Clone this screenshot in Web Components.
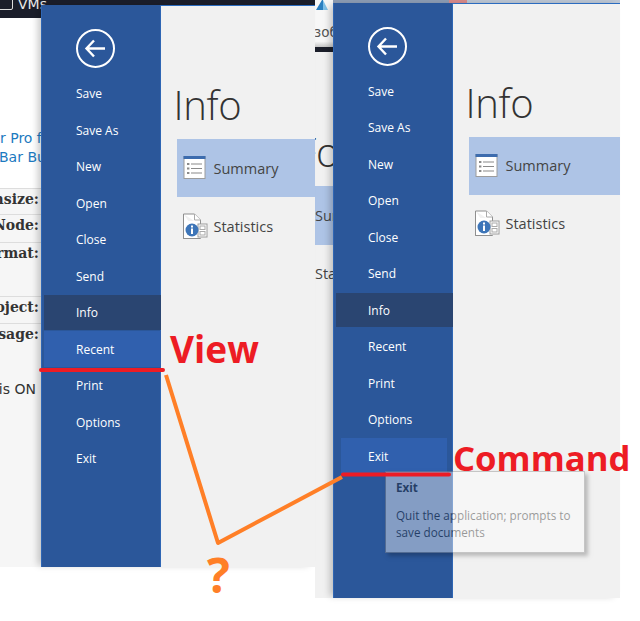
<!DOCTYPE html>
<html lang="en">
<head>
<meta charset="utf-8">
<title>View vs Command</title>
<style>
html,body{margin:0;padding:0;background:#fff}
</style>
</head>
<body>
<x-desktop>
  <x-host-page></x-host-page>
  <x-middle-strip></x-middle-strip>
  <x-top-strip></x-top-strip>
  <x-backstage style="left:41px;top:5px;width:274px;height:562px" hot="Recent" heading="Info"></x-backstage>
  <x-backstage style="left:333px;top:2.5px;width:287px;height:595.5px" hot="Exit" inset heading="Info"></x-backstage>
  <x-tip style="left:385px;top:471px"></x-tip>
  <x-notes></x-notes>
</x-desktop>
<script>
const FONT='"Open Sans","Noto Sans",sans-serif';
function el(name,html){
  customElements.define(name,class extends HTMLElement{
    connectedCallback(){
      if(this.shadowRoot)return;
      this.attachShadow({mode:'open'}).innerHTML=typeof html==='function'?html(this):html;
    }
  });
}
el('x-desktop',`<style>:host{display:block;position:relative;width:640px;height:621px;overflow:hidden;background:#fff}</style><slot></slot>`);

el('x-host-page',`<style>
:host{position:absolute;left:0;top:0;width:315px;height:567px;overflow:hidden;background:#fff;font:14px "DejaVu Sans",sans-serif;display:flex;flex-direction:column}
.bar{height:18px;flex:none;background:#1b1e2a;color:#e8e8e8;position:relative;font-size:14px;line-height:14px}
.bar i{position:absolute;left:-6px;top:-6px;width:17px;height:14px;border:1px solid #ddd;border-radius:2px}
.bar span{position:absolute;left:18px;top:-3px}
.col{width:41px;flex:1;display:flex;flex-direction:column;overflow:hidden}
.links{flex:none;height:170px;box-sizing:border-box;color:#1c7ac0;white-space:nowrap;display:flex;flex-direction:column;justify-content:flex-end;line-height:19px;padding-bottom:21px}
.rows{flex:1;background:#f6f6f6;border-top:1px solid #ddd;font:bold 14px/20px "DejaVu Serif",serif;color:#333;display:flex;flex-direction:column;align-items:stretch}
.row{flex:none;box-sizing:border-box;border-bottom:1px solid #ddd;display:flex;justify-content:flex-end;align-items:flex-start;overflow:hidden;white-space:nowrap;padding-right:2px}
.on{font:14px/20px "DejaVu Sans",sans-serif;display:flex;justify-content:flex-end;padding-right:5px;color:#333;white-space:nowrap}
</style>
<div class="bar"><i></i><span>VMs</span></div>
<div class="col">
<div class="links"><div>r Pro f</div><div style="margin-left:-1px">Bar Bu</div></div>
<div class="rows">
  <div class="row" style="height:26px">nsize:</div><div class="row" style="height:28px">Node:</div><div class="row" style="height:54px">rmat:</div><div class="row" style="height:27px">oject:</div><div class="row" style="height:55px;border:0">sage:</div>
  <div class="on">is ON</div>
</div>
</div>`);

el('x-top-strip',`<style>
:host{position:absolute;left:333px;top:0;width:287px;height:3px;background:#b9c2cf;display:flex}
i{display:block;height:3px}
</style><i style="width:120px;background:#8d9db5"></i><i style="width:18px;margin-left:-4px;background:#d98a8a"></i><i style="flex:1;background:#bcc6d4"></i>`);

el('x-middle-strip',`<style>
:host{position:absolute;left:315px;top:0;width:18px;height:598px;overflow:hidden;background:#f1f1f1;font-family:${FONT};color:#444}
.top{height:47px;background:linear-gradient(#f7f7f7 88%,#c4c4c4);position:relative}
.tri{position:absolute;left:1px;top:0}
.top span{position:absolute;left:-1px;top:24px;color:#555;font:13.5px "DejaVu Sans",sans-serif}
.dark{height:5px;background:#1b1e2a}
.f{position:absolute;left:-19px;top:127px;font-size:40px;font-weight:300;line-height:50px;color:#333;white-space:nowrap}
.band{position:absolute;left:0;top:186px;width:18px;height:59px;background:#aec4e6;line-height:59px;font-size:14.5px;white-space:nowrap;overflow:hidden}
.st{position:absolute;left:0;top:264px;font-size:14.5px;white-space:nowrap}
</style>
<div class="top"><svg class="tri" width="12" height="11"><path d="M0 10 6 0h1v10z" fill="#2a7fc0"/><path d="M7 0l5 10H7z" fill="#7fc0e8"/></svg><span>зоб</span></div>
<div class="dark"></div>
<div class="f">Fo</div>
<div class="band">Sur</div>
<div class="st">Sta</div>`);

el('x-menu-item',`<style>
:host{display:block;height:36.5px;box-sizing:border-box;padding:1px 0 1px 2px;margin-right:-1px;color:#fff;font:12px/36.5px ${FONT}}
div{height:100%;padding-left:32px;box-sizing:border-box}
:host([info]) div{background:#2a4571}
:host([hot]) div{background:#3060ae;line-height:38.5px}
:host([hot]){padding:0 0 0 2px}
:host([inset]){padding:0 6px 0 7px}
:host([inset]) div{padding-left:27px}
</style><div><slot></slot></div>`);

el('x-back',`<style>:host{display:block;width:39px;height:38px;margin:24px 0 8.25px 34px}svg{display:block}</style>
<svg width="39" height="39" viewBox="0 0 39 39"><circle cx="19.500" cy="19.500" r="18.500" fill="none" stroke="#fff" stroke-width="2"/><path d="M10.500 19.500H29M18 11.500 10.500 19.500 18 27.500" fill="none" stroke="#fff" stroke-width="2.400"/></svg>`);

el('x-section',t=>{
  const sum=t.getAttribute('kind')==='summary';
  const icon=sum?`<svg width="24" height="26" viewBox="0 0 24 26" style="margin-left:1px"><rect x="1" y="1.500" width="21" height="22" fill="#fff" stroke="#9c9c9c"/><rect x="0.500" y="1" width="22" height="3" fill="#3d6cae"/><g fill="#8a8a8a"><rect x="4" y="8" width="2.400" height="2"/><rect x="4" y="12.500" width="2.400" height="2"/><rect x="4" y="17" width="2.400" height="2"/><rect x="8" y="8.500" width="11" height="1"/><rect x="8" y="13" width="11" height="1"/><rect x="8" y="17.500" width="11" height="1"/></g></svg>`
  :`<svg width="26" height="27" viewBox="0 0 26 27"><path d="M1.500 1h11l6 6v5M1.500 1v24.500h17" fill="#fff" stroke="#8f8f8f"/><path d="M12.500 1v6h6" fill="#fff" stroke="#aaa"/><rect x="2" y="8" width="16" height="17" fill="#fff"/><path d="M1.500 1v24.500h17" fill="none" stroke="#8f8f8f"/><rect x="16" y="11" width="9" height="13" fill="#fff" stroke="#9c9c9c"/><rect x="18" y="13" width="5" height="3.500" fill="none" stroke="#aaa"/><rect x="18" y="18.500" width="5" height="3.500" fill="none" stroke="#aaa"/><circle cx="10" cy="17" r="6.500" fill="#3d75b8"/><rect x="9" y="15.500" width="2" height="5.500" fill="#fff"/><rect x="9" y="12.500" width="2" height="2" fill="#fff"/></svg>`;
  return `<style>
  :host{display:flex;align-items:center;height:58px;box-sizing:border-box;padding-left:5.500px;font:14.5px ${FONT};color:#444;white-space:nowrap;overflow:hidden}
  :host([kind=summary]){background:#aec4e6}
  .i{flex:none;width:31.500px;display:flex}
  svg{flex:none}
  </style><div class="i">${icon}</div><span><slot></slot></span>`;
});

el('x-backstage',t=>{
  const hot=t.getAttribute('hot'),inset=t.hasAttribute('inset');
  const items=['Save','Save As','New','Open','Close','Send','Info','Recent','Print','Options','Exit'];
  const lis=items.map(n=>`<x-menu-item ${n==='Info'?'info':''} ${n===hot?'hot':''} ${n===hot&&inset?'inset':''}>${n}</x-menu-item>`).join('');
  return `<style>
  :host{position:absolute;display:flex;background:#f1f1f1;box-shadow:-5px 0 7px -2px rgba(0,0,0,.22);border-top:1px solid #2b6cc0;box-sizing:border-box}
  nav{flex:none;width:120px;background:#2b579a;border-left:1px solid #2f66b4;border-right:1px solid #2f66b4;box-sizing:border-box;margin-top:-1px}
  main{flex:1;min-width:0;padding-left:15.500px;overflow:hidden;display:flex;flex-direction:column}
  h1{margin:65px 0 1px -3px;font:300 40px/67px ${FONT};color:#333;height:67px;letter-spacing:-.3px}
  </style>
  <nav><x-back></x-back>${lis}</nav>
  <main><h1>${t.getAttribute('heading')}</h1><x-section kind="summary">Summary</x-section><x-section kind="stats">Statistics</x-section></main>`;
});

el('x-tip',`<style>
:host{position:absolute;display:block;width:200px;height:82px;box-sizing:border-box;background:#fff;border:1px solid #8a8a8a;opacity:.42;box-shadow:3px 3px 4px rgba(0,0,0,.55);padding:7px 10px;font:11.7px/17px ${FONT};color:#1e1e1e}
b{display:block;margin-bottom:11px}
</style><b>Exit</b>Quit the application; prompts to<br>save documents`);

el('x-notes',`<style>
:host{position:absolute;left:0;top:0;width:640px;height:621px;pointer-events:none;font:bold 40px/50px ${FONT}}
svg{position:absolute;left:0;top:0}
span{position:absolute;white-space:nowrap}
.red{color:#ed1c24}
.or{color:#ff7f27}
</style>
<svg width="640" height="621"><path d="M166 375 218 543 342 477" fill="none" stroke="#ff7f27" stroke-width="4" stroke-linejoin="round"/>
<path d="M41 370H163M343 474.500H449" fill="none" stroke="#ed1c24" stroke-width="4" stroke-linecap="round"/></svg>
<span class="red" style="left:170px;top:324px;font-size:37px">View</span>
<span class="red" style="left:453px;top:433px;font-size:34.700px">Command</span>
<span class="or" style="left:207px;top:550px;font-size:48px">?</span>`);
</script>
</body>
</html>
